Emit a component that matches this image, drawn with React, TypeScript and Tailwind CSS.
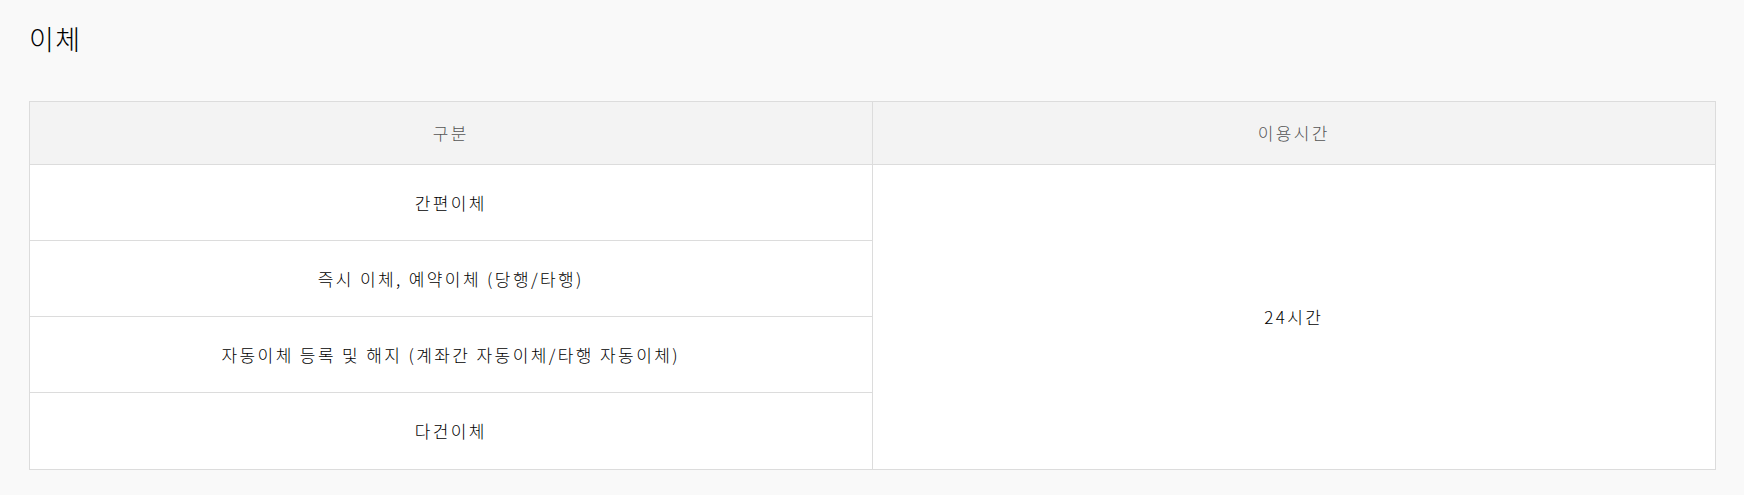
const rows = [
  "간편이체",
  "즉시 이체, 예약이체 (당행/타행)",
  "자동이체 등록 및 해지 (계좌간 자동이체/타행 자동이체)",
  "다건이체",
];

export default function App() {
  return (
    <div
      className="min-h-[495px] bg-[#f9f9f9] pl-[29px] pr-[28px] pt-[22px] text-black"
      style={{ fontFamily: '"Noto Sans CJK KR", "Noto Sans", sans-serif' }}
    >
      {/* 제목 */}
      <h2 className="text-[27px] leading-[34px] tracking-[1.5px] font-light">이체</h2>

      {/* 이용시간 표 */}
      <div className="mt-[45px] grid grid-cols-2 grid-rows-[63px_repeat(4,76px)] border border-[#dcdcdc] bg-white text-[17px] tracking-[2.4px] font-light">
        <div className="flex items-center justify-center border-b border-r border-[#dcdcdc] bg-[#f3f3f3] text-[#555]">
          구분
        </div>
        <div className="flex items-center justify-center border-b border-[#dcdcdc] bg-[#f3f3f3] text-[#555]">
          이용시간
        </div>
        {rows.map((label, i) => (
          <div
            key={label}
            className={
              "col-start-1 flex items-center justify-center border-r border-[#dcdcdc] text-black " +
              (i < rows.length - 1 ? "border-b" : "")
            }
            style={{ gridRowStart: i + 2 }}
          >
            {label}
          </div>
        ))}
        <div className="col-start-2 row-start-2 row-span-4 flex items-center justify-center text-black">
          24시간
        </div>
      </div>
    </div>
  );
}
